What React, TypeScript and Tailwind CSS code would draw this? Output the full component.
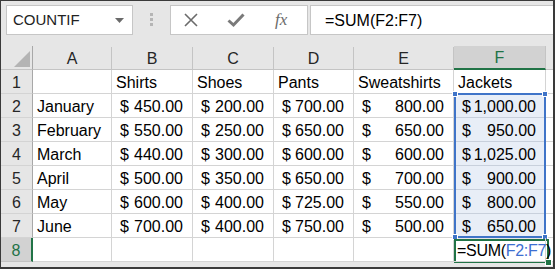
import React from "react";

const cols = ["A", "B", "C", "D", "E", "F"];

const rows: [string, number, number, number, number, number][] = [
  ["January", 450, 200, 700, 800, 1000],
  ["February", 550, 250, 650, 650, 950],
  ["March", 440, 300, 600, 600, 1025],
  ["April", 500, 350, 650, 700, 900],
  ["May", 600, 400, 725, 550, 800],
  ["June", 700, 400, 750, 500, 650],
];

const money = (n: number) =>
  n.toLocaleString("en-US", { minimumFractionDigits: 2, maximumFractionDigits: 2 });

function Money({ value, selected }: { value: number; selected?: boolean }) {
  return (
    <div
      className={`flex h-6 items-center justify-between border-b border-r pl-2 pr-[9px] pt-[2px] ${
        selected ? "border-[#c8d0dc] bg-[#e8eef7]" : "border-[#d4d4d4] bg-white"
      }`}
    >
      <span>$</span>
      <span>{money(value)}</span>
    </div>
  );
}

function Cell({ children }: { children?: React.ReactNode }) {
  return (
    <div className="flex h-6 items-center overflow-visible whitespace-nowrap border-b border-r border-[#d4d4d4] bg-white pl-1 pt-[2px]">
      {children}
    </div>
  );
}

function RowHead({ n, active }: { n: number; active?: boolean }) {
  return (
    <div
      className={`flex h-6 items-center justify-center border-b pt-[2px] ${
        active
          ? "border-r-2 border-b-[#c4c4c4] border-r-[#217346] bg-[#d2d2d2] text-[#217346]"
          : "border-r border-b-[#d4d4d4] border-r-[#a8a8a8] bg-[#e6e6e6] text-[#262626]"
      }`}
    >
      {n}
    </div>
  );
}

export default function App() {
  return (
    <div
      className="flex h-[269px] w-[555px] flex-col overflow-hidden border-b-2 border-l border-r-2 border-t border-[#3a3a3a] bg-[#e6e6e6] text-[16px] text-black"
      style={{ fontFamily: '"Liberation Sans", Arial, sans-serif' }}
    >
      {/* Formula bar */}
      <div className="flex h-[45px] shrink-0 items-start pt-[4px]">
        <div className="ml-[5px] flex h-[30px] w-[127px] items-center justify-between border border-[#c6c6c6] bg-white pl-[6px] pr-[8px] text-[15px] text-[#222]">
          <span className="pt-[1px]">COUNTIF</span>
          <svg width="9" height="5" viewBox="0 0 9 5">
            <path d="M0 0 H9 L4.5 5 Z" fill="#6a6a6a" />
          </svg>
        </div>
        <div className="flex w-[37px] flex-col items-center gap-[2px] pt-[8px]">
          <div className="h-[3px] w-[3px] bg-[#b5b5b5]" />
          <div className="h-[3px] w-[3px] bg-[#b5b5b5]" />
          <div className="h-[3px] w-[3px] bg-[#b5b5b5]" />
        </div>
        <div className="flex h-[30px] w-[138px] items-center border border-[#c6c6c6] bg-white">
          <svg className="ml-[12px]" width="16" height="16" viewBox="0 0 16 16">
            <path d="M2 2 L14 14 M14 2 L2 14" stroke="#6b6b6b" strokeWidth="1.6" />
          </svg>
          <svg className="ml-[28px]" width="18" height="16" viewBox="0 0 18 16">
            <path d="M1.5 8.5 L6.5 13 L16.5 2.5" stroke="#7a7a7a" strokeWidth="3" fill="none" />
          </svg>
          <span
            className="ml-[30px] text-[17px] italic text-[#6b6b6b]"
            style={{ fontFamily: '"Liberation Serif", "Times New Roman", serif' }}
          >
            fx
          </span>
        </div>
        <div className="ml-[2px] flex h-[30px] flex-1 items-center border-y border-l border-[#c6c6c6] bg-white pl-[14px] pt-[1px]">
          =SUM(F2:F7)
        </div>
      </div>

      {/* Grid */}
      <div className="relative flex-1">
        <div className="grid grid-cols-[32px_79px_81px_81px_80px_100px_92px_1fr] grid-rows-[24px_24px_24px_24px_24px_24px_24px_24px_24px_1fr]">
          {/* header row */}
          <div className="relative border-b border-r border-b-[#c4c4c4] border-r-[#a8a8a8] bg-[#e6e6e6]">
            <svg className="absolute bottom-[2px] right-[2px]" width="16" height="16" viewBox="0 0 16 16">
              <path d="M16 0 V16 H0 Z" fill="#b4b4b4" />
            </svg>
          </div>
          {cols.map((c) =>
            c === "F" ? (
              <div
                key={c}
                className="flex items-center justify-center border-b-2 border-r border-b-[#217346] border-r-[#c4c4c4] bg-[#d2d2d2] pt-[2px] text-[#217346]"
              >
                {c}
              </div>
            ) : (
              <div
                key={c}
                className="mt-[1px] flex items-center justify-center border-b border-r border-b-[#c4c4c4] border-r-[#c4c4c4] bg-[#e6e6e6] pt-[2px] text-[#262626]"
              >
                {c}
              </div>
            )
          )}
          <div className="border-b border-[#c4c4c4] bg-[#e6e6e6]" />

          {/* row 1 */}
          <RowHead n={1} />
          <Cell />
          <Cell>Shirts</Cell>
          <Cell>Shoes</Cell>
          <Cell>Pants</Cell>
          <Cell>Sweatshirts</Cell>
          <Cell>Jackets</Cell>
          <div className="border-b border-[#d4d4d4] bg-white" />

          {rows.map((r, i) => (
            <React.Fragment key={r[0]}>
              <RowHead n={i + 2} />
              <Cell>{r[0]}</Cell>
              <Money value={r[1]} />
              <Money value={r[2]} />
              <Money value={r[3]} />
              <Money value={r[4]} />
              <Money value={r[5]} selected />
              <div className="border-b border-[#d4d4d4] bg-white" />
            </React.Fragment>
          ))}

          {/* row 8 */}
          <RowHead n={8} active />
          <Cell />
          <Cell />
          <Cell />
          <Cell />
          <Cell />
          <div className="relative z-30 flex h-6 items-center whitespace-nowrap border-b border-r border-[#d4d4d4] pl-[3px] pt-[2px] tracking-[-0.3px]">
            <span>
              =SUM(<span className="text-[#3d6fd1]">F2:F7</span>)
            </span>
          </div>
          <div className="border-b border-[#d4d4d4] bg-white" />

          {/* filler row */}
          <div className="border-r border-r-[#a8a8a8] bg-[#e6e6e6]" />
          <div className="border-r border-[#d4d4d4] bg-white" />
          <div className="border-r border-[#d4d4d4] bg-white" />
          <div className="border-r border-[#d4d4d4] bg-white" />
          <div className="border-r border-[#d4d4d4] bg-white" />
          <div className="border-r border-[#d4d4d4] bg-white" />
          <div className="border-r border-[#d4d4d4] bg-white" />
          <div className="bg-white" />
        </div>

        {/* selection range F2:F7 */}
        <div className="pointer-events-none absolute left-[453px] top-[47px] h-[145px] w-[92px] border-2 border-[#3f74c8]">
          <div className="absolute -left-[4px] -top-[4px] h-[6px] w-[6px] border border-white bg-[#3f74c8]" />
          <div className="absolute -right-[4px] -top-[4px] h-[6px] w-[6px] border border-white bg-[#3f74c8]" />
          <div className="absolute -bottom-[4px] -left-[4px] h-[6px] w-[6px] border border-white bg-[#3f74c8]" />
          <div className="absolute -bottom-[4px] -right-[4px] h-[6px] w-[6px] border border-white bg-[#3f74c8]" />
        </div>

        {/* active cell F8 */}
        <div className="pointer-events-none absolute left-[453px] top-[193px] z-20 h-[24px] w-[95px] border-2 border-[#217346] bg-white">
          <div className="absolute -bottom-[5px] -right-[5px] h-[7px] w-[7px] border border-white bg-[#217346]" />
        </div>
      </div>
    </div>
  );
}
